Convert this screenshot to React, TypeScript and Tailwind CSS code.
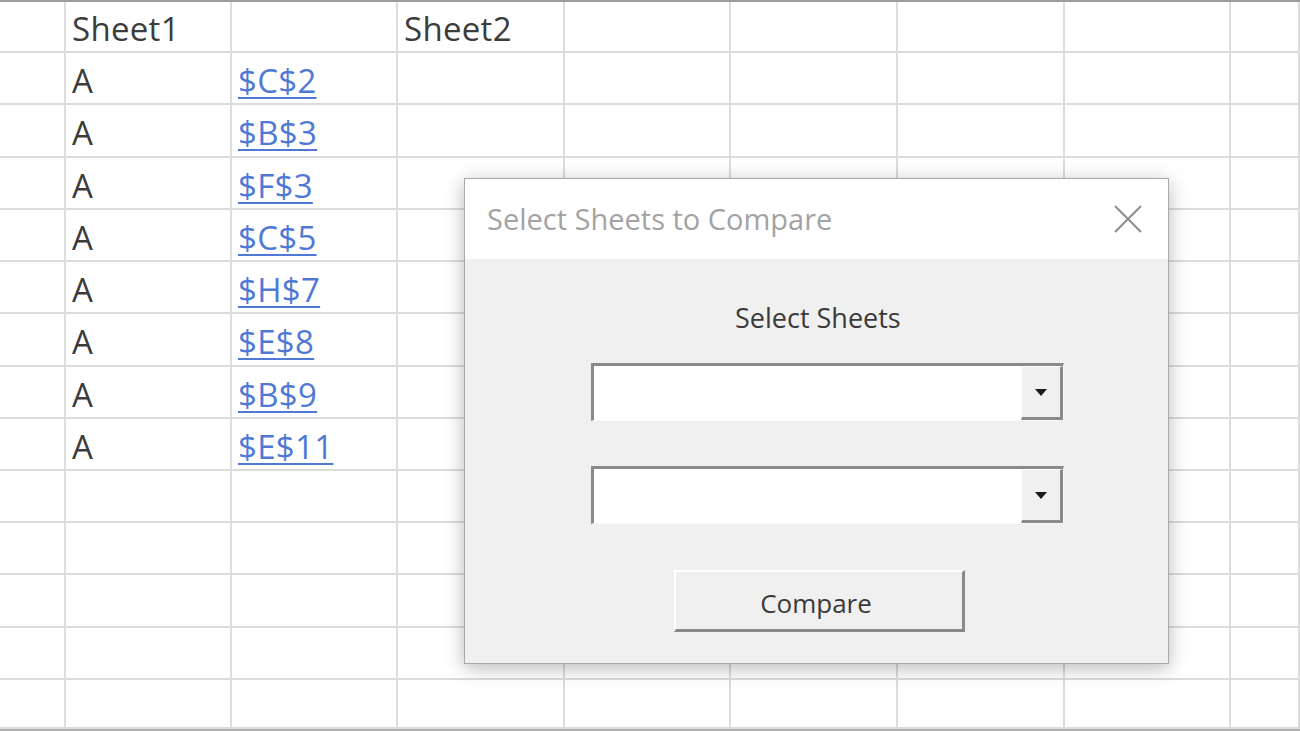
import React from 'react';

const cols = ['w-[66px]', 'w-[166px]', 'w-[166px]', 'w-[167px]', 'w-[166px]', 'w-[167px]', 'w-[167px]', 'w-[166px]', 'flex-1'];
const rowHeights = ['h-[51px]', 'h-[52px]', 'h-[53px]', 'h-[52px]', 'h-[52px]', 'h-[52px]', 'h-[53px]', 'h-[52px]', 'h-[52px]', 'h-[52px]', 'h-[52px]', 'h-[53px]', 'h-[52px]', 'flex-1'];

const refs = ['$C$2', '$B$3', '$F$3', '$C$5', '$H$7', '$E$8', '$B$9', '$E$11'];

const cellText = (r: number, c: number): React.ReactNode => {
    if (r === 0 && c === 1) return 'Sheet1';
    if (r === 0 && c === 3) return 'Sheet2';
    if (r >= 1 && r <= 8 && c === 1) return 'A';
    if (r >= 1 && r <= 8 && c === 2)
        return <span className="text-[#5079d6] underline decoration-2 underline-offset-4">{refs[r - 1]}</span>;
    return null;
};

const ComboBox: React.FC = () => (
    <div className="flex h-[58px] w-[473px] border-t-[3px] border-l-[3px] border-b border-r border-t-[#8a8a8a] border-l-[#8a8a8a] border-b-[#f8f8f8] border-r-[#f8f8f8] bg-white">
        <div className="flex-1" />
        <div className="flex w-[42px] items-center justify-center border-t border-l border-t-white border-l-white border-r-[3px] border-b-[3px] border-r-[#8a8a8a] border-b-[#8a8a8a] bg-[#f0f0f0]">
            <svg width="12" height="7" viewBox="0 0 12 7">
                <path d="M0 0h12L6 7z" fill="#1a1a1a" />
            </svg>
        </div>
    </div>
);

export default function App() {
    return (
        <div className="relative h-[731px] w-[1300px] overflow-hidden bg-white font-['Open_Sans',sans-serif]">
            {/* worksheet grid */}
            <div className="flex h-full flex-col border-t-2 border-[#9c9c9c]">
                {rowHeights.map((h, r) => (
                    <div key={r} className={`flex ${h} ${r === rowHeights.length - 1 ? 'border-b-2 border-[#b0b0b0]' : ''}`}>
                        {cols.map((w, c) => (
                            <div
                                key={c}
                                className={`${w} flex items-center border-r-2 border-b-2 border-[#dcdcdc] pl-[6px] pt-[5px] text-[33px] font-medium tracking-[0.3px] text-[#3c3c3c]`}
                            >
                                {cellText(r, c)}
                            </div>
                        ))}
                    </div>
                ))}
            </div>

            {/* compare dialog */}
            <div className="absolute left-[464px] top-[178px] flex h-[486px] w-[705px] flex-col border border-[#a9a9a9] bg-[#f0f0f0] shadow-[0_4px_18px_rgba(0,0,0,0.28)]">
                <div className="flex h-[80px] items-center justify-between bg-white pl-[22px] pr-[26px]">
                    <span className="text-[29px] text-[#a3a3a3]">Select Sheets to Compare</span>
                    <svg width="28" height="28" viewBox="0 0 28 28">
                        <path d="M1 1L27 27M27 1L1 27" stroke="#8c8c8c" strokeWidth="2" />
                    </svg>
                </div>
                <div className="flex flex-col">
                    <div className="mt-[39px] ml-[270px] text-[27px] leading-[40px] text-[#3a3a3a]">Select Sheets</div>
                    <div className="mt-[25px] ml-[126px]">
                        <ComboBox />
                    </div>
                    <div className="mt-[45px] ml-[126px]">
                        <ComboBox />
                    </div>
                    <button className="mt-[46px] ml-[209px] flex h-[62px] w-[291px] items-center justify-center border-t-2 border-l-2 border-t-white border-l-white border-r-[3px] border-b-[3px] border-r-[#8a8a8a] border-b-[#8a8a8a] bg-[#f0f0f0] pt-[5px] pr-[6px] text-[26px] text-[#3a3a3a]">
                        Compare
                    </button>
                </div>
            </div>
        </div>
    );
}
